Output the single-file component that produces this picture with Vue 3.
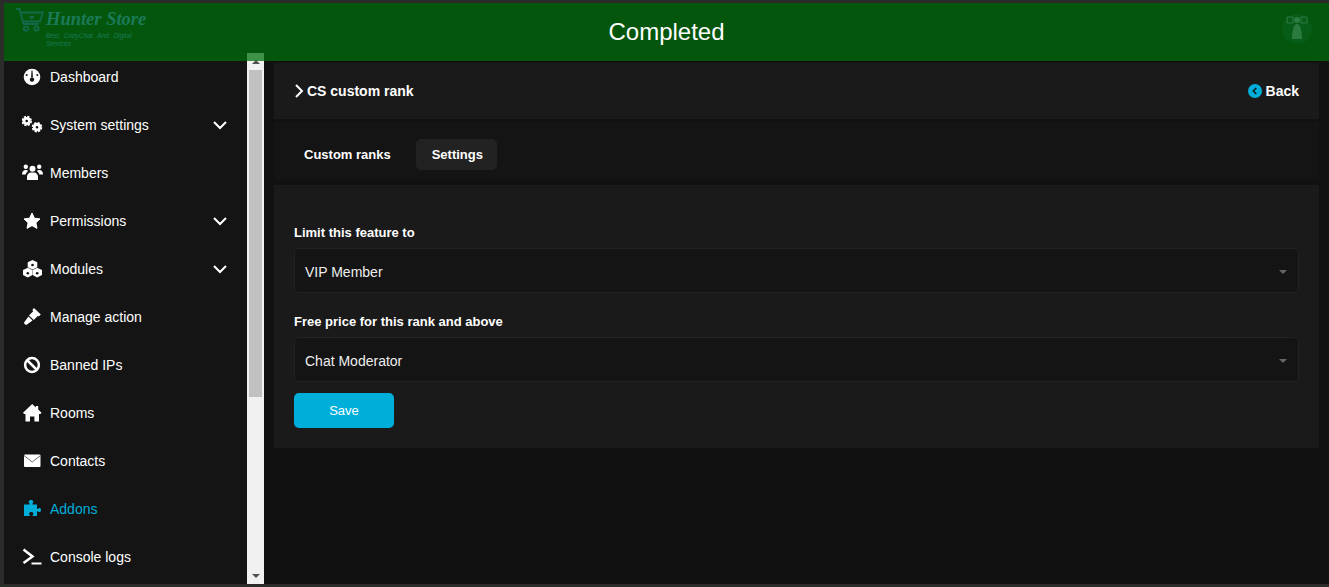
<template>
  <div class="page">
    <header class="topbar">
      <div class="logo">
        <svg class="cart" width="29" height="24" viewBox="0 0 29 24" fill="none" stroke="#14694a" stroke-width="1.8">
          <path d="M1 1h3.500l4 15h15" />
          <path d="M5.500 4.500H28l-3 9H8" />
          <path d="M14.500 8.200c1-1.200 2.200-.3 2.200.3 0-.6 1.200-1.500 2.200-.3.8 1.200-1.200 2.600-2.200 3.200-1-.6-3-2-2.200-3.200z" fill="#14694a" stroke="none" />
          <circle cx="11" cy="20.500" r="2.200" />
          <circle cx="21.500" cy="20.500" r="2.200" />
        </svg>
        <div class="logo-text">
          <div class="logo-name">Hunter Store</div>
          <div class="logo-sub">Best CodyChat And Digital Services</div>
        </div>
      </div>
      <div class="title">Completed</div>
      <div class="avatar">
        <svg width="30" height="32" viewBox="0 0 30 32">
          <circle cx="15" cy="16" r="15" fill="#075c18" />
          <path d="M5 4h6v6H5zM19 4h6v6h-6z" fill="none" stroke="#2b7a40" stroke-width="1" />
          <circle cx="15" cy="7" r="3" fill="#2b7a40" />
          <path d="M10 26c0-9 2-15 5-15s5 6 5 15z" fill="#2b7a40" />
        </svg>
      </div>
    </header>

    <div class="content">
      <aside class="sidebar">
        <nav class="menu">
          <div v-for="item in menu" :key="item.label" class="menu-item" :class="{ active: item.active }">
            <svg class="menu-icon" width="22" height="20" viewBox="0 0 22 20">
              <g v-if="item.icon === 'dashboard'">
                <circle cx="10" cy="10" r="8.300" fill="currentColor" />
                <circle cx="4.700" cy="8" r="1" fill="#141414" />
                <circle cx="15.300" cy="8" r="1" fill="#141414" />
                <path d="M9.500 3.500h1l.4 7h-1.800z" fill="#141414" />
                <circle cx="10" cy="12.600" r="2.200" fill="#141414" />
              </g>
              <g v-else-if="item.icon === 'cogs'" fill="none" stroke="currentColor">
                <circle cx="4.700" cy="6" r="2.700" stroke-width="2.800" />
                <circle cx="4.700" cy="6" r="4.400" stroke-width="1.800" stroke-dasharray="2.200 1.260" />
                <circle cx="15" cy="12.200" r="2.700" stroke-width="2.800" />
                <circle cx="15" cy="12.200" r="4.400" stroke-width="1.800" stroke-dasharray="2.200 1.260" />
              </g>
              <g v-else-if="item.icon === 'users'" fill="currentColor">
                <circle cx="10.500" cy="5.800" r="3" />
                <circle cx="3.800" cy="3.800" r="2.200" />
                <circle cx="17.200" cy="3.800" r="2.200" />
                <path d="M5 17v-3a4 4 0 0 1 4-4.400h3a4 4 0 0 1 4 4.400v3z" />
                <path d="M0 11.500c0-3 1.500-4.500 3.500-4.500 1 0 2 .2 2.700 1-1.400 1-2.300 2.200-2.500 3.500z" />
                <path d="M21 11.500c0-3-1.500-4.500-3.500-4.500-1 0-2 .2-2.700 1 1.400 1 2.300 2.200 2.500 3.500z" />
              </g>
              <path
                v-else-if="item.icon === 'star'"
                d="M10 2l2.400 5.200 5.600.7-4.100 3.900 1.100 5.600-5-2.800-5 2.800 1.100-5.600L2 7.900l5.600-.7z"
                fill="currentColor"
                stroke="currentColor"
                stroke-width="1"
                stroke-linejoin="round"
              />
              <g v-else-if="item.icon === 'cubes'" fill="currentColor">
                <path d="M10.500 1l4.800 2.200v5L10.500 10.400 5.700 8.200V3.200z" />
                <path d="M5.800 8.800l4.600 2.300v5L5.800 18.500 1 16.100v-5z" />
                <path d="M15.200 8.800l4.800 2.300v5l-4.800 2.400-4.600-2.400v-5z" />
                <circle cx="10.500" cy="6" r="1.300" fill="#141414" />
                <circle cx="5.800" cy="14.300" r="1.300" fill="#141414" />
                <circle cx="15.200" cy="14.300" r="1.300" fill="#141414" />
              </g>
              <g v-else-if="item.icon === 'gavel'" fill="currentColor">
                <path d="M12 1l6.800 6.500-2 2L16 8.800 11.800 13 7 8.500l4.200-4.300-.9-1.200z" />
                <path d="M6.500 9.500l4 4-5.500 4c-1 .6-1.800.3-2.400-.4-.6-.7-.7-1.500 0-2.300z" />
              </g>
              <g v-else-if="item.icon === 'ban'" fill="none" stroke="currentColor" stroke-width="2.500">
                <circle cx="10" cy="10" r="6.900" />
                <path d="M5 5l10 10" />
              </g>
              <g v-else-if="item.icon === 'home'" fill="currentColor">
                <path d="M10.200 1L1 9.800l1 1.200h1.500v7.500H8V13.500h4.400v5H17V11h1.500l1-1.200-3.300-3.200V3h-2.400v1.400z" />
              </g>
              <g v-else-if="item.icon === 'envelope'">
                <rect x="2" y="3.500" width="16.500" height="12.500" rx="1" fill="currentColor" />
                <path d="M2 4.500l8.200 6.500 8.300-6.500" fill="none" stroke="#6e6e6e" stroke-width="1" />
              </g>
              <path
                v-else-if="item.icon === 'puzzle'"
                d="M2 5.500h5.500c.6-.8-.8-1.500-.8-2.800C6.700 1.500 7.800 1 9 1s2.300.5 2.300 1.700c0 1.300-1.400 2-.8 2.800H15v4.300c.8.600 1.300-.7 2.500-.7 1 0 1.500 1 1.500 2s-.5 2-1.500 2c-1.200 0-1.700-1.300-2.500-.7V17h-4.200c-.6-.7.7-1.200.7-2.400 0-1-1-1.600-2.200-1.600-1.200 0-2.200.6-2.200 1.600 0 1.200 1.300 1.700.7 2.400H2z"
                fill="currentColor"
              />
              <g v-else-if="item.icon === 'terminal'" fill="none" stroke="currentColor">
                <path d="M1.500 2.500L10.500 9.500l-9 6.500" stroke-width="2.500" />
                <path d="M9.500 16.500H19.500" stroke-width="2" />
              </g>
            </svg>
            <span class="menu-label">{{ item.label }}</span>
            <svg v-if="item.sub" class="menu-arrow" width="16" height="16" viewBox="0 0 16 16" fill="none" stroke="currentColor" stroke-width="2">
              <path d="M2 5l6 6 6-6" />
            </svg>
          </div>
        </nav>
        <div class="scrollbar">
          <div class="scroll-btn"><span class="tri-up"></span></div>
          <div class="scroll-thumb"></div>
          <div class="scroll-rest"></div>
          <div class="scroll-btn"><span class="tri-down"></span></div>
        </div>
      </aside>

      <main class="main">
        <section class="panel head-panel">
          <div class="crumb">
            <svg width="10" height="14" viewBox="0 0 10 14" fill="none" stroke="#fff" stroke-width="2">
              <path d="M2 1l6 6-6 6" />
            </svg>
            <span>CS custom rank</span>
          </div>
          <div class="back">
            <svg width="14" height="14" viewBox="0 0 14 14">
              <circle cx="7" cy="7" r="7" fill="#00aeda" />
              <path d="M8.300 4L5.300 7l3 3" fill="none" stroke="#141414" stroke-width="1.500" />
            </svg>
            <span>Back</span>
          </div>
        </section>

        <section class="tabs">
          <div v-for="tab in tabs" :key="tab" class="tab" :class="{ selected: tab === activeTab }" @click="activeTab = tab">
            {{ tab }}
          </div>
        </section>

        <section class="panel form-panel">
          <div v-for="field in fields" :key="field.label" class="field">
            <label class="field-label">{{ field.label }}</label>
            <div class="select">
              <span>{{ field.value }}</span>
              <span class="select-arrow"></span>
            </div>
          </div>
          <button class="save">Save</button>
        </section>
      </main>
    </div>
  </div>
</template>

<script setup>
import { ref } from 'vue'

const menu = [
  { label: 'Dashboard', icon: 'dashboard' },
  { label: 'System settings', icon: 'cogs', sub: true },
  { label: 'Members', icon: 'users' },
  { label: 'Permissions', icon: 'star', sub: true },
  { label: 'Modules', icon: 'cubes', sub: true },
  { label: 'Manage action', icon: 'gavel' },
  { label: 'Banned IPs', icon: 'ban' },
  { label: 'Rooms', icon: 'home' },
  { label: 'Contacts', icon: 'envelope' },
  { label: 'Addons', icon: 'puzzle', active: true },
  { label: 'Console logs', icon: 'terminal' },
]

const tabs = ['Custom ranks', 'Settings']
const activeTab = ref('Settings')

const fields = [
  { label: 'Limit this feature to', value: 'VIP Member' },
  { label: 'Free price for this rank and above', value: 'Chat Moderator' },
]
</script>

<style>
html,
body {
  margin: 0;
  background: #111;
  overflow: hidden;
}
</style>

<style scoped>
.page {
  box-sizing: border-box;
  height: 587px;
  border-top: 3px solid #2b2b2b;
  border-bottom: 3px solid #2b2b2b;
  border-left: 4px solid #2a2d2a;
  display: flex;
  flex-direction: column;
  background: #111;
  color: #fff;
  font-family: "Liberation Sans", Arial, sans-serif;
  font-size: 14px;
  overflow: hidden;
}

.topbar {
  position: relative;
  z-index: 2;
  flex: none;
  height: 58px;
  display: grid;
  grid-template-columns: 1fr auto 1fr;
  align-items: center;
  background: rgba(0, 110, 12, 0.74);
}

.logo {
  display: flex;
  gap: 2px;
  padding-left: 11px;
  align-self: start;
  padding-top: 5px;
}

.cart {
  flex: none;
}

.logo-text {
  width: 98px;
  color: #1b7a58;
}

.logo-name {
  font-family: "Liberation Serif", serif;
  font-style: italic;
  font-weight: bold;
  font-size: 18.500px;
  line-height: 22px;
  white-space: nowrap;
}

.logo-sub {
  font-style: italic;
  font-size: 6.500px;
  line-height: 8px;
  word-spacing: 3px;
  margin-top: 2px;
  width: 92px;
}

.title {
  font-size: 24px;
  line-height: 28px;
}

.avatar {
  justify-self: end;
  padding-right: 17px;
  margin-bottom: 6px;
  display: flex;
}

.content {
  flex: 1;
  min-height: 0;
  display: flex;
  margin-top: -8px;
}

.sidebar {
  flex: none;
  width: 260px;
  display: flex;
  background: #141414;
}

.menu {
  flex: 1;
  overflow: hidden;
}

.menu-item {
  height: 48px;
  display: flex;
  align-items: center;
  padding: 0 19px 0 18px;
  color: #fff;
}

.menu-item.active {
  color: #00aeda;
}

.menu-icon {
  flex: none;
  margin-right: 6px;
}

.menu-label {
  flex: 1;
}

.menu-arrow {
  flex: none;
}

.scrollbar {
  flex: none;
  width: 17px;
  display: flex;
  flex-direction: column;
  background: #f1f1f1;
}

.scroll-btn {
  flex: none;
  height: 17px;
  display: flex;
  align-items: center;
  justify-content: center;
}

.tri-up {
  border-left: 4px solid transparent;
  border-right: 4px solid transparent;
  border-bottom: 4px solid #505050;
}

.tri-down {
  border-left: 4px solid transparent;
  border-right: 4px solid transparent;
  border-top: 4px solid #505050;
}

.scroll-thumb {
  flex: none;
  height: 327px;
  margin: 0 2px;
  background: #c1c1c1;
}

.scroll-rest {
  flex: 1;
}

.main {
  flex: 1;
  min-width: 0;
  padding: 10px 10px 0;
  background: #111;
}

.panel {
  background: #1a1a1a;
}

.head-panel {
  height: 56px;
  display: flex;
  align-items: center;
  justify-content: space-between;
  padding: 0 20px;
  font-weight: bold;
}

.crumb {
  display: flex;
  align-items: center;
  gap: 3px;
}

.back {
  display: flex;
  align-items: center;
  gap: 4px;
}

.tabs {
  margin-top: 3px;
  height: 58px;
  box-sizing: border-box;
  padding: 6px 14px 0;
  display: flex;
  align-items: center;
  gap: 9px;
  background: #141414;
}

.tab {
  height: 31px;
  display: flex;
  align-items: center;
  padding: 0 16px;
  border-radius: 5px;
  font-size: 13px;
  font-weight: bold;
}

.tab.selected {
  padding: 0 14px 0 16px;
  background: #222;
}

.form-panel {
  margin-top: 5px;
  padding: 40px 20px 20px;
}

.field {
  margin-bottom: 21px;
}

.field:last-of-type {
  margin-bottom: 11px;
}

.field-label {
  display: block;
  font-size: 13px;
  font-weight: bold;
  line-height: 16px;
  margin-bottom: 7px;
}

.select {
  box-sizing: border-box;
  height: 45px;
  padding: 2px 11px 0 10px;
  display: flex;
  align-items: center;
  justify-content: space-between;
  background: #141414;
  border: 1px solid #222;
  border-radius: 5px;
  color: #eee;
}

.select-arrow {
  margin-top: 1px;
  border-left: 4px solid transparent;
  border-right: 4px solid transparent;
  border-top: 4px solid #666;
}

.save {
  display: block;
  width: 100px;
  height: 35px;
  border: 0;
  border-radius: 5px;
  background: #00aeda;
  color: #fff;
  font-family: inherit;
  font-size: 13px;
}
</style>
